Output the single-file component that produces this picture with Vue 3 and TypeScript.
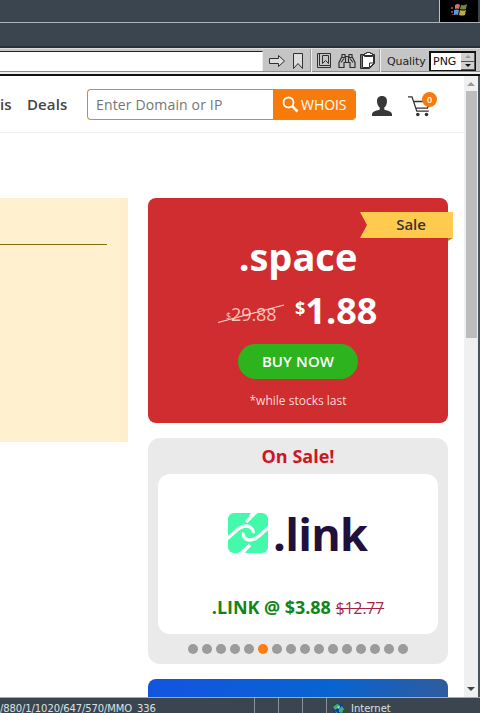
<script setup lang="ts">
const dots: number[] = Array.from({ length: 16 }, (_, i) => i)
const activeDot = 5
</script>

<template>
  <div class="window">
    <div class="menubar">
      <div class="throbber">
        <svg width="18" height="16" viewBox="0 0 18 16">
          <path d="M4 3 Q7 1 9 3 L8 7 Q6 6 4 7Z" fill="#d4735c" />
          <path d="M10 3 Q13 4 16 2 L15 7 Q12 8 9 7Z" fill="#718b45" />
          <path d="M3 8 Q6 7 8 8 L7 13 Q5 12 3 13Z" fill="#5a9bd8" />
          <path d="M9 8 Q12 9 15 8 L14 13 Q11 14 8 13Z" fill="#c3a849" />
          <path d="M0 5h2v2H0zM0 9h2v2H0zM1 12h2v1H1z" fill="#7d4259" />
        </svg>
      </div>
    </div>
    <div class="linkbar"></div>
    <div class="toolbar">
      <div class="address"></div>
      <svg class="tools" width="119" height="23" viewBox="0 0 119 23" fill="none" stroke="#303030">
        <path d="M6.500 9.500h9v-3l6 5.500-6 5.500v-3h-9z" fill="#ddd" />
        <path d="M30.500 4.500h9v15l-4.500-5-4.500 5z" fill="#ddd" />
        <path d="M48.500 0v23M117.500 0v23" stroke="#eee" />
        <path d="M47.500 0v23M116.500 0v23" stroke="#999" />
        <path d="M54.500 4.500h13v14h-13zM56.500 4.500v12h11M59.500 6.500h6v8l-3-3-3 3z" />
        <path d="M76 18.500v-5l3-6v-2h3v2h4v-2h3v2l3 6v5h-5v-5h-6v5zM79 8.500h3M86 8.500h3M78 13.500l3-4M90 13.500l-3-4M82.500 8v5M85.500 8v5" stroke-width="1.200" />
        <path d="M97.500 5.500h14v9l-5 5h-9z" fill="#777" />
        <path d="M99.500 6.500h11v8l-4 4h-7zM101.500 4.500h2v-1h4v1h2v3h-8z" fill="#fff" />
        <path d="M106.500 18v-4h4" />
      </svg>
      <span class="quality">Quality</span>
      <div class="select">
        <span>PNG</span>
        <div class="spin">
          <i class="up"></i>
          <i class="down"></i>
        </div>
      </div>
    </div>
    <div class="viewport">
      <div class="site">
        <header class="header">
          <span class="nav nav-cut">is</span>
          <span class="nav nav-deals">Deals</span>
          <div class="search">
            <span class="placeholder">Enter Domain or IP</span>
            <div class="whois">
              <svg width="17" height="17" viewBox="0 0 17 17" fill="none" stroke="#fff">
                <circle cx="6.500" cy="6.500" r="5" stroke-width="1.800" />
                <path d="M10.200 10.200l5.300 5.300" stroke-width="2.600" />
              </svg>
              <span>WHOIS</span>
            </div>
          </div>
          <svg class="user" width="20" height="20" viewBox="0 0 20 20">
            <path d="M10 0c3.400 0 5 2.100 5 5.200 0 3-1.200 5-2.700 6.300v2c1.300 1.200 7.700 1.300 7.700 4.800V20H0v-1.700c0-3.500 6.400-3.600 7.700-4.800v-2C6.200 10.200 5 8.200 5 5.200 5 2.100 6.600 0 10 0z" fill="#383838" />
          </svg>
          <div class="cart">
            <svg width="23" height="21" viewBox="0 0 23 21" fill="none" stroke="#333" stroke-width="1.300">
              <path d="M0 .8h4l4.800 14.400h12M5.500 5.500h16.500l-2.500 6.500-12 .2" />
              <circle cx="9.800" cy="18.500" r="1.800" fill="#333" stroke="none" />
              <circle cx="18.500" cy="18.500" r="1.800" fill="#333" stroke="none" />
            </svg>
            <span class="count">0</span>
          </div>
        </header>
        <main class="content">
          <section class="notice"><hr /></section>
          <aside class="offers">
            <section class="promo">
              <div class="ribbon">
                <svg width="93" height="29" viewBox="0 0 93 29">
                  <path d="M88 26h5l-5 3z" fill="#b9862a" />
                  <path d="M0 0h93v26H0l7-13z" fill="#ffcb4f" />
                </svg>
                <span>Sale</span>
              </div>
              <h2>.space</h2>
              <div class="prices">
                <span class="old"><small>$</small>29.88
                  <svg width="68" height="20" viewBox="0 0 68 20"><path d="M1 18.500L67 1" stroke="#ffd4ca" stroke-width="1.100" /></svg>
                </span>
                <span class="new"><small>$</small>1.88</span>
              </div>
              <div class="buy">BUY NOW</div>
              <p>*while stocks last</p>
            </section>
            <section class="sale">
              <h3>On Sale!</h3>
              <div class="slide">
                <div class="logo">
                  <svg width="40" height="40" viewBox="0 0 40 40">
                    <rect width="40" height="40" rx="6" fill="#42faaa" />
                    <path d="M23 0h7l-4 3h-5zM10 40l4-3h5l-2 3z" fill="#fff" />
                    <g fill="none" stroke="#fff" stroke-width="3.300" stroke-linejoin="round">
                      <path d="M-1 26L9 17Q16 11 22 14Q26 17 25 20" />
                      <path d="M41 14L31 23Q24 29 18 26Q14 23 16 20" />
                      <path d="M18 9L26 1M22 32L14 40" />
                    </g>
                  </svg>
                  <span>.link</span>
                </div>
                <div class="deal"><b>.LINK @ $3.88</b><s>$12.77</s></div>
              </div>
              <div class="dots">
                <i v-for="d in dots" :key="d" :class="{ on: d === activeDot }"></i>
              </div>
            </section>
            <section class="next"></section>
          </aside>
        </main>
      </div>
      <div class="scrollbar">
        <i class="arrow-up"></i>
        <div class="thumb"></div>
        <i class="arrow-down"></i>
      </div>
    </div>
    <footer class="status">
      <span class="path">/880/1/1020/647/570/MMO_336</span>
      <i class="cell"></i><i class="cell"></i><i class="cell"></i>
      <div class="zone">
        <svg width="13" height="12" viewBox="0 0 13 12">
          <circle cx="6.500" cy="6" r="5.500" fill="#1237b5" />
          <path d="M1 4l4-3 3 1-2 3-3 2zM7 6l3-3 2 3-2 4-3-1zM3 8l2 1v2z" fill="#38b85c" />
          <path d="M5 4l3-1-1 3z" fill="#bcecf7" />
        </svg>
        <span>Internet</span>
      </div>
    </footer>
  </div>
</template>

<style>
body { margin: 0; overflow: hidden; }
</style>

<style scoped>
* { box-sizing: border-box; }
.window {
  width: 480px; height: 713px; display: flex; flex-direction: column; overflow: hidden;
  background: #fff; font-family: "Open Sans", "Noto Sans", sans-serif; white-space: nowrap;
}
.menubar {
  height: 23px; background: #3b454f; border-bottom: 1px solid #aeb5ba;
  display: flex; justify-content: flex-end; padding-right: 2px; flex-shrink: 0;
}
.throbber {
  width: 39px; height: 22px; background: #000; border-left: 1px solid #bcc0c4;
  display: flex; align-items: flex-start; justify-content: center; padding: 2px 0 0 2px;
}
.linkbar { height: 26px; background: #3b454f; border-bottom: 1px solid #ddd; box-shadow: inset 0 -2px #29323a; flex-shrink: 0; }
.toolbar {
  height: 27px; flex-shrink: 0; display: flex; align-items: flex-start; background: #c5c5c5;
  border-bottom: 2px solid #111; box-shadow: inset 0 -2px #eee, inset 0 -3px #8c8c8c;
}
.address { width: 263px; height: 20px; margin-top: 2px; background: #fff; border-top: 1px solid #222; border-right: 1px solid #eee; }
.tools { display: block; flex-shrink: 0; }
.quality { font: 11px/25px "DejaVu Sans", sans-serif; color: #222; width: 47px; padding-left: 5px; letter-spacing: -.1px; }
.select {
  width: 47px; height: 20px; margin-top: 2px; background: #fff; border: 1px solid #111; border-width: 2px 1px 1px 2px;
  display: flex; justify-content: space-between; font: 11px/18px "DejaVu Sans", sans-serif; color: #111; padding-left: 2px;
}
.spin { width: 14px; display: flex; flex-direction: column; background: #d0d0d0; }
.spin i { flex: 1; display: flex; align-items: center; justify-content: center; border: 1px solid #555; border-width: 0 1px 1px 0; }
.spin i::after { content: ""; border: 3px solid transparent; }
.spin .up::after { border-top: 0; border-bottom-color: #999; }
.spin .down::after { border-bottom: 0; border-top-color: #111; }
.viewport { height: 621px; flex-shrink: 0; display: flex; border-right: 2px solid #4c5358; }
.site { width: 464px; overflow: hidden; background: #fff; }
.header { height: 57px; border-bottom: 1px solid #eee; display: flex; align-items: flex-start; }
.nav { font-size: 15px; line-height: 22px; font-weight: 600; color: #444; margin-top: 17px; }
.nav-cut { width: 27px; }
.nav-deals { width: 60px; letter-spacing: .1px; }
.search {
  width: 269px; height: 31px; margin-top: 13px; border: 1px solid #d18b35; border-right: 0; border-radius: 4px;
  display: flex; justify-content: space-between; overflow: hidden;
}
.placeholder { color: #757575; font-size: 14px; line-height: 29px; padding-left: 8px; letter-spacing: .15px; }
.whois {
  width: 83px; margin: -1px 0; background: #f77b0b; color: #fff; display: flex; align-items: center; gap: 2px;
  padding-left: 9px; font-size: 14px; letter-spacing: -.05px;
}
.user { margin: 20px 0 0 16px; }
.cart { position: relative; margin: 20px 0 0 16px; width: 23px; height: 21px; }
.cart svg { display: block; }
.count {
  position: absolute; left: 14px; top: -4px; width: 15px; height: 15px; border-radius: 50%; background: #f77b0b;
  color: #fff; font-size: 9px; line-height: 15px; font-weight: 600; text-align: center;
}
.content { display: flex; gap: 20px; align-items: flex-start; padding-top: 65px; }
.notice { width: 128px; height: 244px; background: #fff1d0; padding: 46px 13px 0 0; border-right: 8px solid #ffeecb; }
.notice hr { margin: 0; height: 1px; border: 0; background: #806b13; }
.offers { width: 300px; }
.promo {
  position: relative; height: 225px; border-radius: 8px; background: #cf2d2f; color: #fff;
  display: flex; flex-direction: column; align-items: center;
}
.ribbon { position: absolute; left: 212px; top: 14px; width: 93px; height: 29px; }
.ribbon svg { display: block; }
.ribbon span { position: absolute; inset: 0 0 3px 9px; font-size: 15px; line-height: 25px; font-weight: 600; color: #333; text-align: center; letter-spacing: -.1px; }
h2 { margin: 33px 0 0; font-size: 38px; line-height: 50px; font-weight: 700; }
.prices { display: flex; width: 100%; padding-left: 78px; height: 50px; margin-top: 5px; }
.old { position: relative; width: 69px; font-size: 18px; line-height: 56px; color: #ffc1b9; letter-spacing: -.1px; }
.old small { font-size: 9px; vertical-align: 2px; }
.old svg { position: absolute; left: -9px; top: 18px; }
.new { font-size: 36px; line-height: 50px; font-weight: 700; }
.new small { font-size: 18px; vertical-align: 9px; line-height: 1; }
.buy { width: 120px; height: 35px; margin-top: 8px; border-radius: 18px; background: #2cb31e; font-size: 15px; line-height: 34px; font-weight: 600; text-align: center; letter-spacing: .1px; }
p { margin: 13px 0 0; font-size: 12px; line-height: 18px; color: #ffdad5; }
.sale { height: 226px; margin-top: 15px; border-radius: 12px; background: #eaeaea; padding: 6px 10px 0; }
h3 { margin: 0; color: #cd1524; text-align: center; font-size: 18px; line-height: 25px; font-weight: 700; }
.slide { height: 160px; margin-top: 5px; border-radius: 12px; background: #fff; display: flex; flex-direction: column; }
.logo { display: flex; align-items: center; height: 65px; margin: 26px 0 0 70px; gap: 5px; }
.logo span { color: #20103c; font-size: 45px; line-height: 60px; font-weight: 700; letter-spacing: -.7px; padding-top: 2px; }
.deal { display: flex; justify-content: center; gap: 5px; align-items: baseline; line-height: 26px; margin-top: 29px; }
.deal b { color: #128516; font-size: 18px; letter-spacing: -.05px; }
.deal s { color: #a32646; font-size: 15.5px; }
.dots { display: flex; justify-content: center; gap: 4px; margin-top: 10px; }
.dots i { width: 10px; height: 10px; border-radius: 50%; background: #9b9b9b; }
.dots .on { background: #ff7c12; }
.next { height: 40px; margin-top: 15px; border-radius: 8px 8px 0 0; background: linear-gradient(100deg, #1254df, #0864d2 60%, #315b9c); }
.scrollbar { width: 14px; background: #f0f0f0; display: flex; flex-direction: column; align-items: center; }
.arrow-up { border: 4px solid transparent; border-top: 0; border-bottom-color: #999; margin: 6px 0 5px; }
.thumb { width: 11px; height: 247px; background: #bdbdbd; }
.arrow-down { border: 4px solid transparent; border-bottom: 0; border-top-color: #444; margin-top: auto; margin-bottom: 6px; }
.status {
  height: 16px; flex-shrink: 0; background: #3b454f; border-top: 1px solid #a2acb3; display: flex; color: #dce1e4;
  font: 10px/22px "DejaVu Sans", sans-serif; overflow: hidden;
}
.path { width: 254px; letter-spacing: -.1px; }
.cell { width: 24px; border-left: 1px solid #899299; }
.zone { flex: 1; border-left: 1px solid #899299; display: flex; padding-left: 5px; gap: 6px; }
.zone svg { margin-top: 5px; }
</style>
